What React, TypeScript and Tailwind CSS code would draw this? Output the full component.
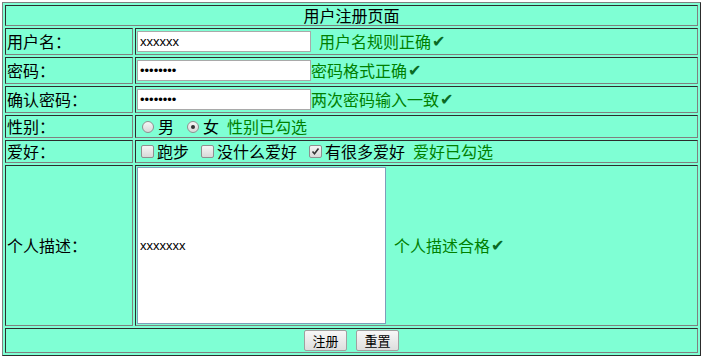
import type { ReactNode } from 'react';

const cell = 'border border-[#808080] [border-style:inset] p-px align-middle';

function Radio({ checked }: { checked?: boolean }) {
  return (
    <span className="inline-flex w-[12px] h-[12px] rounded-full border border-[#8f8f8f] bg-gradient-to-b from-[#f6f6f6] to-[#d8d8d8] items-center justify-center align-[-1px]">
      {checked && <span className="w-[4px] h-[4px] rounded-full bg-[#333]" />}
    </span>
  );
}

function Check({ checked }: { checked?: boolean }) {
  return (
    <span className="inline-flex w-[13px] h-[13px] rounded-[2px] border border-[#8f8f8f] bg-gradient-to-b from-[#f6f6f6] to-[#d8d8d8] items-center justify-center align-[-1px]">
      {checked && (
        <svg width="9" height="9" viewBox="0 0 9 9">
          <path d="M1.5 4.5 L3.5 6.8 L7.5 1.5" stroke="#333" strokeWidth="1.6" fill="none" />
        </svg>
      )}
    </span>
  );
}

function Ok({ children, className = '' }: { children: ReactNode; className?: string }) {
  return (
    <span className={`flex items-center text-[#008000] ${className}`}>
      {children}
      <span className="text-[#0a6a24] font-['DejaVu_Sans',sans-serif] text-[16px] leading-none ml-px">✔</span>
    </span>
  );
}

function TextBox({ value }: { value: string }) {
  return (
    <span className="inline-block align-middle w-[174px] h-[21px] border border-[#a9a9a9] bg-white px-[2px] font-['Liberation_Sans',sans-serif] text-[13px] leading-[19px] text-black">
      {value}
    </span>
  );
}

export default function App() {
  return (
    <div className="pl-[2px] pt-[2px] bg-white w-[701px] h-[359px] overflow-hidden font-['Noto_Sans_CJK_SC','Liberation_Sans',sans-serif] text-[16px] leading-[17px] text-black">
      <table className="w-[699px] border-separate border-spacing-[2px] border border-[#808080] [border-style:outset] bg-[#7fffd4]">
        <tbody>
          <tr className="h-[21px]">
            <td colSpan={2} className={`${cell} text-center`}>用户注册页面</td>
          </tr>
          <tr className="h-[27px]">
            <td className={`${cell} w-[128px]`}>用户名：</td>
            <td className={cell}>
              <div className="flex items-center">
                <TextBox value="xxxxxx" />
                <Ok className="ml-[8px]">用户名规则正确</Ok>
              </div>
            </td>
          </tr>
          <tr className="h-[27px]">
            <td className={cell}>密码：</td>
            <td className={cell}>
              <div className="flex items-center">
                <TextBox value="••••••••" />
                <Ok>密码格式正确</Ok>
              </div>
            </td>
          </tr>
          <tr className="h-[27px]">
            <td className={cell}>确认密码：</td>
            <td className={cell}>
              <div className="flex items-center">
                <TextBox value="••••••••" />
                <Ok>两次密码输入一致</Ok>
              </div>
            </td>
          </tr>
          <tr className="h-[23px]">
            <td className={cell}>性别：</td>
            <td className={cell}>
              <div className="flex items-center">
                <span className="ml-[5px] mr-[4px] flex"><Radio /></span>
                <span>男</span>
                <span className="ml-[13px] mr-[4px] flex"><Radio checked /></span>
                <span>女</span>
                <span className="ml-[8px] text-[#008000]">性别已勾选</span>
              </div>
            </td>
          </tr>
          <tr className="h-[23px]">
            <td className={cell}>爱好：</td>
            <td className={cell}>
              <div className="flex items-center">
                <span className="ml-[4px] mr-[3px] flex"><Check /></span>
                <span>跑步</span>
                <span className="ml-[12px] mr-[3px] flex"><Check /></span>
                <span>没什么爱好</span>
                <span className="ml-[12px] mr-[3px] flex"><Check checked /></span>
                <span>有很多爱好</span>
                <span className="ml-[8px] text-[#008000]">爱好已勾选</span>
              </div>
            </td>
          </tr>
          <tr className="h-[161px]">
            <td className={cell}>个人描述：</td>
            <td className={cell}>
              <div className="flex items-center">
                <div className="w-[249px] h-[157px] border border-[#7f9db9] bg-white flex items-center px-[2px] font-['Liberation_Sans',sans-serif] text-[13px]">
                  xxxxxxx
                </div>
                <Ok className="ml-[8px]">个人描述合格</Ok>
              </div>
            </td>
          </tr>
          <tr className="h-[25px]">
            <td colSpan={2} className={cell}>
              <div className="flex justify-center gap-[9px]">
                <button className="w-[43px] h-[21px] border border-[#a0a0a0] rounded-[2px] bg-gradient-to-b from-[#f7f7f7] to-[#dedede] text-[13px] leading-[19px]">注册</button>
                <button className="w-[43px] h-[21px] border border-[#a0a0a0] rounded-[2px] bg-gradient-to-b from-[#f7f7f7] to-[#dedede] text-[13px] leading-[19px]">重置</button>
              </div>
            </td>
          </tr>
        </tbody>
      </table>
    </div>
  );
}
